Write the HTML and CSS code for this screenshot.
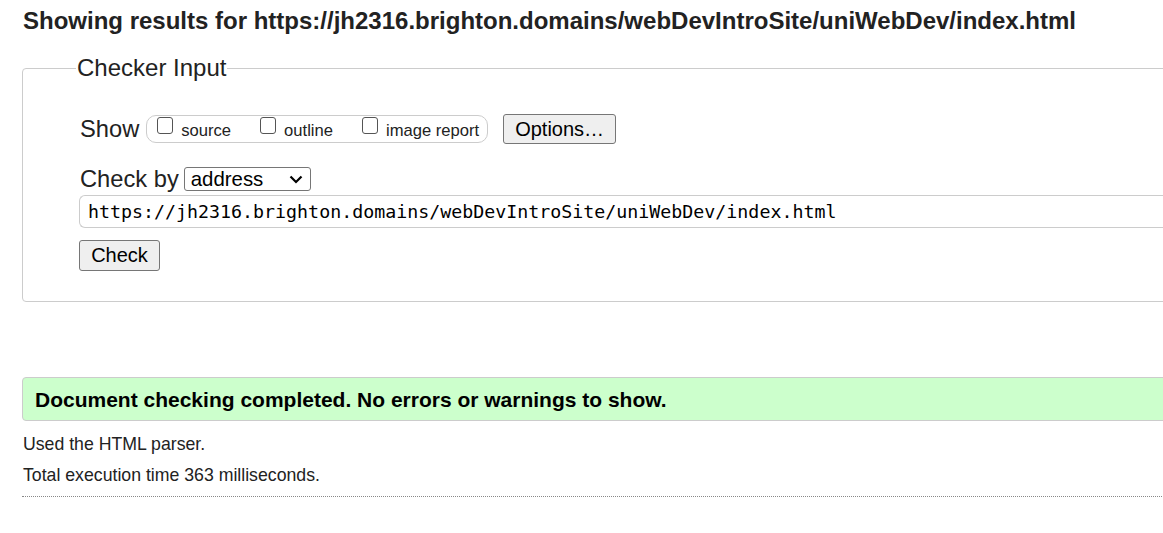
FILE: index.html
```html
<!DOCTYPE html>
<html>
<head>
<meta charset="utf-8">
<link rel="stylesheet" href="styles.css">
</head>
<body>
<div class="page">
  <h2 class="title">Showing results for https://jh2316.brighton.domains/webDevIntroSite/uniWebDev/index.html</h2>
  <fieldset class="checker">
    <legend class="legend">Checker Input</legend>
    <div class="row row-show">
      <span class="label">Show</span>
      <span class="group">
        <label class="opt"><span class="cb"></span><span class="opt-text">source</span></label>
        <label class="opt"><span class="cb"></span><span class="opt-text">outline</span></label>
        <label class="opt"><span class="cb"></span><span class="opt-text">image report</span></label>
      </span>
      <button class="btn btn-options">Options…</button>
    </div>
    <div class="row row-by">
      <span class="label label-by">Check by</span>
      <div class="sel">
        <span class="sel-text">address</span>
        <svg class="chev" width="14" height="9" viewBox="0 0 14 9"><path d="M1.5 1.5 L7 7 L12.5 1.5" fill="none" stroke="#000" stroke-width="2.2"/></svg>
      </div>
    </div>
    <div class="url">https://jh2316.brighton.domains/webDevIntroSite/uniWebDev/index.html</div>
    <div class="row row-check">
      <button class="btn btn-check">Check</button>
    </div>
  </fieldset>
  <div class="success">Document checking completed. No errors or warnings to show.</div>
  <p class="info info-first">Used the HTML parser.</p>
  <p class="info">Total execution time 363 milliseconds.</p>
  <hr class="rule">
</div>
</body>
</html>
```

FILE: styles.css
```css
html, body {
  margin: 0;
  padding: 0;
  overflow: hidden;
  background: #fff;
}
body {
  font-family: "Liberation Sans", Arial, sans-serif;
  color: #222;
}
.page {
  width: 1400px;
  padding: 0 0 0 22px;
}
.title {
  margin: 0;
  padding: 7px 0 0 1px;
  font-size: 24px;
  line-height: 28px;
  font-weight: bold;
  color: #222;
}
.checker {
  margin: 19px 0 0 0;
  padding: 0 0 30px 56px;
  border: 1px solid #ccc;
  border-radius: 4px;
  min-width: 0;
}
.legend {
  margin-left: -3px;
  padding: 0 1px;
  font-size: 24px;
  line-height: 28px;
}
.row {
  display: flex;
  align-items: center;
}
.row-show {
  margin-top: 32px;
  height: 30px;
}
.label {
  font-size: 23.7px;
  line-height: 28px;
  margin-left: 1px;
  margin-right: 7px;
}
.label-by {
  margin-right: 5px;
}
.group {
  display: flex;
  align-items: flex-start;
  height: 26px;
  border: 1px solid #ccc;
  border-radius: 10px;
  padding: 0 8px 0 10px;
  gap: 29px;
}
.opt {
  display: flex;
  align-items: flex-start;
  gap: 8px;
}
.cb {
  display: block;
  margin-top: 1px;
  width: 14px;
  height: 15px;
  border: 1px solid #555;
  border-radius: 3px;
  background: #fff;
}
.opt-text {
  font-size: 16.6px;
  line-height: 20px;
  margin-top: 5px;
}
.btn {
  font-family: "Liberation Sans", Arial, sans-serif;
  background: #efefef;
  border: 1px solid #767676;
  border-radius: 3px;
  color: #000;
  padding: 0;
}
.btn-options {
  margin-left: 15px;
  width: 113px;
  height: 30px;
  font-size: 20px;
}
.row-by {
  margin-top: 23px;
  height: 24px;
}
.sel {
  box-sizing: border-box;
  display: flex;
  align-items: center;
  justify-content: space-between;
  width: 127px;
  height: 24px;
  border: 1px solid #767676;
  border-radius: 3px;
  background: #fff;
  padding: 0 7px 0 6px;
}
.sel-text {
  font-size: 20.4px;
  color: #000;
}
.chev {
  display: block;
  margin-top: 1px;
}
.url {
  margin-top: 4px;
  height: 31px;
  border: 1px solid #ccc;
  border-right: none;
  border-radius: 6px 0 0 6px;
  font-family: "DejaVu Sans Mono", monospace;
  font-size: 18.3px;
  line-height: 31px;
  padding-left: 8px;
  color: #000;
}
.row-check {
  margin-top: 12px;
}
.btn-check {
  width: 81px;
  height: 31px;
  font-size: 20px;
}
.success {
  margin-top: 75px;
  height: 44px;
  box-sizing: border-box;
  background: #ccffcc;
  border: 1px solid #ccc;
  border-radius: 4px;
  padding-left: 12px;
  font-size: 21px;
  font-weight: bold;
  line-height: 43px;
  color: #000;
}
.info {
  margin: 0;
  padding-left: 1px;
  font-size: 17.7px;
  line-height: 31px;
  color: #222;
}
.info-first {
  margin-top: 8px;
}
.rule {
  margin: 5px 0 0 0;
  border: none;
  border-top: 1px dotted #888;
}
```
